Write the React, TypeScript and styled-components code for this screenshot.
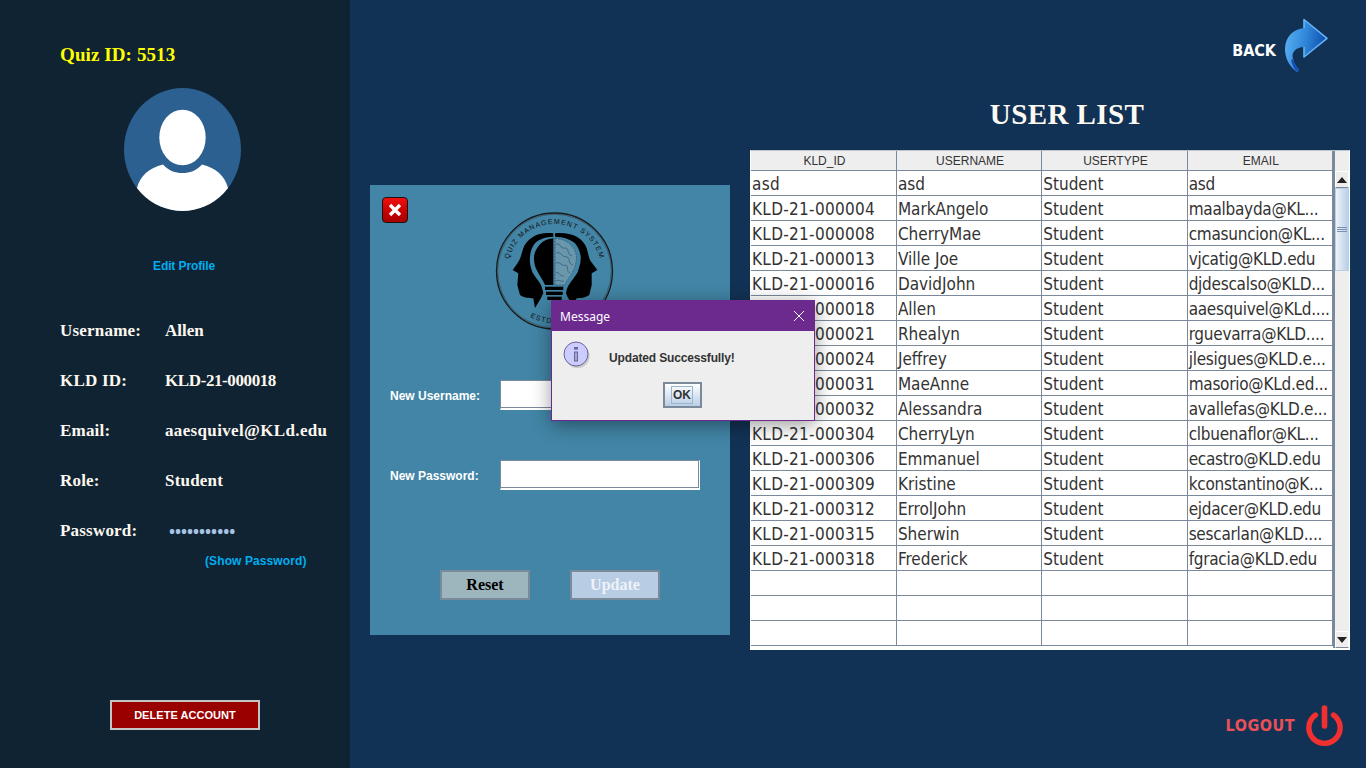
import React from 'react';
import styled, { createGlobalStyle } from 'styled-components';

const GlobalStyle = createGlobalStyle`
  html, body { margin: 0; padding: 0; height: 100%; overflow: hidden; }
  body { font-family: "Liberation Sans", Arial, sans-serif; background: #123255; }
`;

const serif = `"Liberation Serif", "Times New Roman", serif`;
const humanist = `"DejaVu Sans", "Noto Sans", sans-serif`;
const lineColor = '#7a8a9a';

const Page = styled.div`
  width: 1366px;
  height: 768px;
  display: flex;
  overflow: hidden;
  background: #123255;
`;

/* left profile column */
const Sidebar = styled.aside`
  width: 350px;
  flex: none;
  box-sizing: border-box;
  background: #0f2333;
  padding: 43px 0 38px 60px;
  display: flex;
  flex-direction: column;
`;

const QuizId = styled.div`
  font: bold 19px/24px ${serif};
  letter-spacing: 0.1px;
  color: #ffff00;
`;

const AvatarWrap = styled.div`
  width: 118px;
  height: 124px;
  margin: 21px 0 0 64px;
`;

const EditLink = styled.a`
  font-size: 12px;
  line-height: 14px;
  font-weight: bold;
  letter-spacing: -0.1px;
  color: #00aeef;
  margin: 47px 0 0 93px;
`;

const InfoList = styled.div`
  margin-top: 48px;
  display: flex;
  flex-direction: column;
  gap: 30px;
`;

const InfoRow = styled.div`
  display: flex;
  height: 20px;
  align-items: center;
  font: bold 17px/20px ${serif};
  color: #fdf8ef;
`;

const InfoLabel = styled.span`
  width: 105px;
  flex: none;
  letter-spacing: 0.2px;
`;

const InfoValue = styled.span<{ $tracking: number }>`
  letter-spacing: ${(p) => p.$tracking}px;
`;

const PasswordDots = styled.span`
  margin-left: 4px;
  font: bold 16px/20px "Noto Sans", sans-serif;
  color: #a9c3e3;
`;

const ShowPassword = styled.a`
  font-size: 12px;
  line-height: 14px;
  font-weight: bold;
  letter-spacing: 0.1px;
  color: #00aeef;
  margin: 13px 0 0 145px;
`;

const DeleteButton = styled.button`
  width: 150px;
  height: 30px;
  margin: auto 0 0 50px;
  padding: 0;
  background: #990000;
  border: 2px solid #c4c4c4;
  color: #fff;
  font: bold 11px "Liberation Sans", Arial, sans-serif;
  letter-spacing: 0.05px;
`;

/* main area */
const Main = styled.main`
  position: relative;
  flex: 1;
  display: grid;
  grid-template-columns: 360px 600px;
  column-gap: 20px;
  padding-left: 20px;
`;

const FormColumn = styled.div`
  padding-top: 185px;
`;

const FormCard = styled.section`
  width: 360px;
  height: 450px;
  box-sizing: border-box;
  background: #4285a6;
  padding: 12px 20px 0 12px;
  display: flex;
  flex-direction: column;
`;

const CardTop = styled.div`
  height: 183px;
  display: flex;
  align-items: flex-start;
`;

const CloseButton = styled.button`
  width: 26px;
  height: 26px;
  padding: 0;
  border: 1px solid #1c1010;
  border-radius: 4px;
  background: linear-gradient(180deg, #f01010 0%, #c80000 55%, #a80000 100%);
  display: flex;
  align-items: center;
  justify-content: center;
`;

const LogoWrap = styled.div`
  width: 122px;
  height: 122px;
  margin: 13px 0 0 86px;
`;

const Field = styled.div`
  display: flex;
  align-items: center;
  height: 30px;
  margin: 0 0 50px 8px;
`;

const FieldLabel = styled.label`
  width: 110px;
  flex: none;
  padding-top: 1px;
  color: #fff;
  font-size: 12px;
  font-weight: bold;
`;

const TextInput = styled.input`
  width: 200px;
  height: 30px;
  box-sizing: border-box;
  background: #fff;
  border-style: solid;
  border-width: 1px 1px 2px 1px;
  border-color: ${lineColor} #fff #fff ${lineColor};
  box-shadow: inset 0 -1px 0 ${lineColor}, inset -1px 0 0 ${lineColor};
`;

const ButtonRow = styled.div`
  display: flex;
  gap: 40px;
  margin: 30px 0 0 58px;
`;

const FormButton = styled.button<{ $disabled?: boolean }>`
  width: 90px;
  height: 30px;
  padding: 0;
  border: 2px solid ${lineColor};
  background: ${(p) => (p.$disabled ? '#b8cce4' : '#9db5bd')};
  color: ${(p) => (p.$disabled ? '#eef2f8' : '#000')};
  font: bold 16px ${serif};
`;

const ListColumn = styled.div`
  display: flex;
  flex-direction: column;
  height: 768px;
`;

const BackRow = styled.div`
  height: 82px;
  display: flex;
  align-items: flex-start;
  justify-content: flex-end;
  gap: 8px;
  padding: 18px 22px 0 0;
  box-sizing: border-box;
`;

const BackLabel = styled.span`
  font: bold 16px/20px ${humanist};
  font-stretch: condensed;
  color: #fff;
  margin-top: 23px;
`;

const Title = styled.h1`
  margin: 0;
  height: 68px;
  padding: 14px 0 0 34px;
  box-sizing: border-box;
  text-align: center;
  font: bold 29px/36px ${serif};
  letter-spacing: 0.4px;
  color: #fdfaf3;
`;

const TableFrame = styled.div`
  width: 600px;
  height: 500px;
  box-sizing: border-box;
  border: 1px solid #fff;
  border-width: 1px 1px 2px 1px;
  border-top-color: #b9c3cc;
  background: #fff;
  display: flex;
  overflow: hidden;
`;

const TableBody = styled.table`
  width: 582px;
  flex: none;
  table-layout: fixed;
  border-collapse: collapse;
  align-self: flex-start;
`;

const HeadCell = styled.th`
  height: 19px;
  padding: 2px 0 0 2px;
  box-sizing: border-box;
  background: #eeeeee;
  border: 1px solid ${lineColor};
  border-width: 0 1px 1px 0;
  font-size: 12px;
  line-height: 14px;
  font-weight: normal;
  color: #333;
  text-align: center;
`;

const Cell = styled.td`
  height: 24px;
  box-sizing: content-box;
  padding: 0 0 0 1px;
  border: 1px solid ${lineColor};
  border-width: 0 1px 1px 0;
  font: 17px/26px ${humanist};
  font-stretch: condensed;
  color: #333;
  white-space: nowrap;
  overflow: visible;

  &:first-child {
    letter-spacing: 0.3px;
  }

  &:last-child {
    letter-spacing: -0.25px;
  }
`;

const CellText = styled.div`
  height: 24px;
`;

const Scrollbar = styled.div`
  flex: 1;
  box-sizing: border-box;
  display: flex;
  flex-direction: column;
  background: #eeeeee;
  border-left: 2px solid ${lineColor};
  padding-top: 20px;
`;

const ScrollButton = styled.div`
  height: 15px;
  flex: none;
  background: #eeeeee;
  border: 1px solid #fff;
  border-bottom-color: ${lineColor};
  display: flex;
  align-items: center;
  justify-content: center;
  font-size: 0;
`;

const ScrollThumb = styled.div`
  height: 83px;
  flex: none;
  background: linear-gradient(90deg, #eef3fa, #b8cfe5);
  border: 1px solid #b8cfe5;
  box-sizing: border-box;
  display: flex;
  align-items: center;
  justify-content: center;
`;

const ScrollTrack = styled.div`
  flex: 1;
`;

const LogoutRow = styled.div`
  flex: 1;
  display: flex;
  align-items: flex-start;
  justify-content: flex-end;
  gap: 10px;
  padding: 54px 5px 0 0;
`;

const LogoutLabel = styled.span`
  font: bold 16px/22px ${humanist};
  font-stretch: condensed;
  letter-spacing: 0.5px;
  color: #ea5055;
  margin-top: 11px;
`;

/* floating message dialog */
const Dialog = styled.div`
  position: absolute;
  left: 201px;
  top: 300px;
  width: 264px;
  height: 121px;
  box-sizing: border-box;
  border: 1px solid #6c2a8f;
  background: #eeeeee;
  box-shadow: 0 4px 18px rgba(0, 0, 0, 0.4);
`;

const DialogBar = styled.div`
  height: 30px;
  background: #6c2a8f;
  color: #fff;
  display: flex;
  align-items: center;
  justify-content: space-between;
  padding: 0 9px 0 8px;
  font: 12px "Noto Sans", sans-serif;
`;

const DialogBody = styled.div`
  display: flex;
  align-items: center;
  gap: 18px;
  padding: 7px 0 0 11px;
  height: 34px;
`;

const DialogText = styled.span`
  font-size: 12px;
  font-weight: bold;
  letter-spacing: -0.15px;
  color: #333;
  margin-top: 6px;
`;

const OkRow = styled.div`
  display: flex;
  justify-content: center;
  padding: 10px 2px 0 0;
`;

const OkButton = styled.button`
  width: 39px;
  height: 26px;
  box-sizing: border-box;
  padding: 0;
  border: 2px solid ${lineColor};
  background: linear-gradient(180deg, #ffffff, #b8cfe5);
  display: flex;
  align-items: center;
  justify-content: center;
`;

const OkFocus = styled.span`
  border: 1px solid #9db4d0;
  font: 12px/14px "Liberation Sans", Arial, sans-serif;
  font-weight: bold;
  color: #333;
  padding: 1px 1px;
`;

const Avatar = () => (
  <svg width="118" height="124" viewBox="0 0 118 124">
    <defs>
      <clipPath id="avatar-clip">
        <ellipse cx="58.5" cy="61.5" rx="58.5" ry="61.5" />
      </clipPath>
    </defs>
    <ellipse cx="58.5" cy="61.5" rx="58.5" ry="61.5" fill="#2c6090" />
    <g clipPath="url(#avatar-clip)">
      <ellipse cx="58.5" cy="49.5" rx="23.2" ry="27.8" fill="#fff" />
      <path
        d="M39 76.5 C45 83 51 85 58.5 85 C66 85 72 83 78 76.5 C92 80 101 88 104 100 L104 124 L13 124 L13 100 C16 88 25 80 39 76.5 Z"
        fill="#fff"
      />
    </g>
  </svg>
);

const Logo = () => (
  <svg width="122" height="122" viewBox="0 0 122 122">
    <defs>
      <path id="logo-top" d="M13.5 61 A47 47 0 0 1 107.5 61" />
      <path id="logo-bottom" d="M8.5 61 A52 52 0 0 0 112.5 61" />
    </defs>
    <circle cx="60.5" cy="61" r="58" fill="none" stroke="#1b1b1b" strokeWidth="1.3" />
    <circle cx="60.5" cy="61" r="56.8" fill="none" stroke="#333" strokeWidth="0.5" />
    <text fontFamily="Liberation Sans, sans-serif" fontSize="7" letterSpacing="1.1" fill="#111" textAnchor="middle">
      <textPath href="#logo-top" startOffset="50%">QUIZ MANAGEMENT SYSTEM</textPath>
    </text>
    <text fontFamily="Liberation Sans, sans-serif" fontSize="7" letterSpacing="1.2" fill="#111">
      <textPath href="#logo-bottom" startOffset="56">ESTD</textPath>
    </text>
    {/* left face, inner edge follows the bulb outline */}
    <path
      d="M59.3 23.3 C50 22.5 44 24 39.3 26.7 C34 30 30.5 34 29.3 38.3 L26.7 46.7 C25.5 51 22 55 18.7 60 L24.3 63.3 L23.3 75 L26 85 C30 88 35 88 39.3 88.3 L41 98 L47 88 L49.3 83.3 C48.5 79 47.5 76 46 73.3 C42 67 38.5 64 37.7 60 C36 55 35.5 51 36 46.7 C36.5 41 38 37 41 33.3 C45 29 52 27 59.3 26.7 Z"
      fill="#000"
    />
    {/* right face */}
    <path
      d="M61 23.3 C70 22.5 77 24 82.7 26.7 C88 30 91.5 34 92.7 38.3 L95.3 48.3 C96.5 52 100 55 103.3 60 L97.7 63.3 L97.7 75 L95.3 85 C91 88 87 88 82.7 88.3 L79.3 95 L74 88 L72 83.3 C72.5 79 74 76 76 73.3 C80 67 83.5 64 84.3 60 C86 55 87 51 86.7 46.7 C86 41 84 37 81 33.3 C76 29 69 27 61 26.7 Z"
      fill="#000"
    />
    {/* bulb: solid half and brain half */}
    <path d="M59.3 28.3 C53 29 49 31 46 34.3 C42 39 40 43 40 48.3 C40 53 41 57 42.7 60 C45 65 49 70 51 75 L59.3 75 Z" fill="#000" />
    <path
      d="M61 28.3 C70 29 78 33 81.5 42 C84 50 81 58 77 65 C74 69 72 72 71 75 L61 75 Z"
      fill="#6b97ad"
      stroke="#2e5e78"
      strokeWidth="0.8"
      strokeDasharray="2 1"
    />
    <path
      d="M62 34 C68 33 65 39 71 38 C76 38 72 44 78 46 M62 43 C67 41 67 47 73 47 C77 49 73 53 79 55 M62 53 C66 51 68 57 72 55 C75 57 72 62 76 63 M62 63 C66 61 65 67 70 66 M62 71 C65 69 66 72 70 71"
      fill="none"
      stroke="#2e5e78"
      strokeWidth="0.8"
    />
    <rect x="51" y="76.7" width="18.3" height="3.3" fill="#000" />
    <rect x="52" y="81.7" width="16.7" height="3.3" fill="#000" />
    <rect x="53.3" y="86.7" width="14.4" height="3.3" fill="#000" />
  </svg>
);

const BackArrow = () => (
  <svg width="44" height="56" viewBox="0 0 44 56">
    <defs>
      <linearGradient id="back-fill" x1="0" y1="0" x2="1" y2="0.2">
        <stop offset="0" stopColor="#5db4f4" />
        <stop offset="0.55" stopColor="#2f86d8" />
        <stop offset="1" stopColor="#0f4fae" />
      </linearGradient>
    </defs>
    <path
      d="M20 1.5 L43 20.3 L20 39 V29 C12 29 7 34 9 41 C10 46 13 49 15 52 L13 54 C5 48 1 40 1 31 C1 18 10 11 20 10 Z"
      fill="url(#back-fill)"
    />
    <path d="M20 10 V1.5 L43 20.3 L20 39 V29" fill="none" stroke="#62b4f5" strokeWidth="1.6" strokeLinejoin="round" />
    <path d="M9 41 C10 46 13 49 15 52 L13 54 C10 51 8 47 7 42 Z" fill="#1450b8" />
  </svg>
);

const PowerIcon = () => (
  <svg width="40" height="42" viewBox="0 0 40 42">
    <path d="M10.5 11 A15.6 15.6 0 1 0 28.5 11" fill="none" stroke="#f33030" strokeWidth="5.4" strokeLinecap="round" />
    <line x1="19.5" y1="4" x2="19.5" y2="22" stroke="#f33030" strokeWidth="5.6" strokeLinecap="round" />
  </svg>
);

const InfoBadge = () => (
  <svg width="28" height="28" viewBox="0 0 28 28">
    <circle cx="14.5" cy="15" r="12" fill="#9a9a9a" opacity="0.45" />
    <circle cx="13" cy="13" r="12" fill="#ccccff" stroke="#66669a" strokeWidth="1" />
    <rect x="11" y="10.5" width="4" height="10" fill="#66669a" />
    <rect x="11" y="6" width="4" height="2.6" fill="#66669a" />
    <rect x="12.5" y="11.5" width="1" height="8" fill="#e8e8ff" />
  </svg>
);

const infoRows: [string, string, number][] = [
  ['Username:', 'Allen', 0],
  ['KLD ID:', 'KLD-21-000018', -0.4],
  ['Email:', 'aaesquivel@KLd.edu', 0.35],
  ['Role:', 'Student', 0.2],
];

const users = [
  ['asd', 'asd', 'Student', 'asd'],
  ['KLD-21-000004', 'MarkAngelo', 'Student', 'maalbayda@KL...'],
  ['KLD-21-000008', 'CherryMae', 'Student', 'cmasuncion@KL...'],
  ['KLD-21-000013', 'Ville Joe', 'Student', 'vjcatig@KLD.edu'],
  ['KLD-21-000016', 'DavidJohn', 'Student', 'djdescalso@KLD...'],
  ['KLD-21-000018', 'Allen', 'Student', 'aaesquivel@KLd....'],
  ['KLD-21-000021', 'Rhealyn', 'Student', 'rguevarra@KLD....'],
  ['KLD-21-000024', 'Jeffrey', 'Student', 'jlesigues@KLD.e...'],
  ['KLD-21-000031', 'MaeAnne', 'Student', 'masorio@KLd.ed...'],
  ['KLD-21-000032', 'Alessandra', 'Student', 'avallefas@KLD.e...'],
  ['KLD-21-000304', 'CherryLyn', 'Student', 'clbuenaflor@KL...'],
  ['KLD-21-000306', 'Emmanuel', 'Student', 'ecastro@KLD.edu'],
  ['KLD-21-000309', 'Kristine', 'Student', 'kconstantino@K...'],
  ['KLD-21-000312', 'ErrolJohn', 'Student', 'ejdacer@KLD.edu'],
  ['KLD-21-000315', 'Sherwin', 'Student', 'sescarlan@KLD....'],
  ['KLD-21-000318', 'Frederick', 'Student', 'fgracia@KLD.edu'],
  ['', '', '', ''],
  ['', '', '', ''],
  ['', '', '', ''],
];

const App: React.FC = () => (
  <Page>
    <GlobalStyle />
    <Sidebar>
      <QuizId>Quiz ID: 5513</QuizId>
      <AvatarWrap>
        <Avatar />
      </AvatarWrap>
      <EditLink>Edit Profile</EditLink>
      <InfoList>
        {infoRows.map(([label, value, tracking]) => (
          <InfoRow key={label}>
            <InfoLabel>{label}</InfoLabel>
            <InfoValue $tracking={tracking}>{value}</InfoValue>
          </InfoRow>
        ))}
        <InfoRow>
          <InfoLabel>Password:</InfoLabel>
          <PasswordDots>•••••••••••</PasswordDots>
        </InfoRow>
      </InfoList>
      <ShowPassword>(Show Password)</ShowPassword>
      <DeleteButton>DELETE ACCOUNT</DeleteButton>
    </Sidebar>

    <Main>
      <FormColumn>
        <FormCard>
          <CardTop>
            <CloseButton>
              <svg width="16" height="16" viewBox="0 0 16 16">
                <path d="M3 3 L13 13 M13 3 L3 13" stroke="#fff" strokeWidth="3.4" />
              </svg>
            </CloseButton>
            <LogoWrap>
              <Logo />
            </LogoWrap>
          </CardTop>
          <Field>
            <FieldLabel>New Username:</FieldLabel>
            <TextInput />
          </Field>
          <Field>
            <FieldLabel>New Password:</FieldLabel>
            <TextInput />
          </Field>
          <ButtonRow>
            <FormButton>Reset</FormButton>
            <FormButton $disabled>Update</FormButton>
          </ButtonRow>
        </FormCard>
      </FormColumn>

      <ListColumn>
        <BackRow>
          <BackLabel>BACK</BackLabel>
          <BackArrow />
        </BackRow>
        <Title>USER LIST</Title>
        <TableFrame>
          <TableBody>
            <thead>
              <tr>
                <HeadCell>KLD_ID</HeadCell>
                <HeadCell>USERNAME</HeadCell>
                <HeadCell>USERTYPE</HeadCell>
                <HeadCell>EMAIL</HeadCell>
              </tr>
            </thead>
            <tbody>
              {users.map((row, i) => (
                <tr key={i}>
                  {row.map((value, j) => (
                    <Cell key={j}>
                      <CellText>{value}</CellText>
                    </Cell>
                  ))}
                </tr>
              ))}
            </tbody>
          </TableBody>
          <Scrollbar>
            <ScrollButton>
              <svg width="10" height="6" viewBox="0 0 10 6">
                <path d="M5 0 L10 6 H0 Z" fill="#222" />
              </svg>
            </ScrollButton>
            <ScrollThumb>
              <svg width="10" height="5" viewBox="0 0 10 5">
                <path d="M0 .5 H10 M0 2.5 H10 M0 4.5 H10" stroke="#7a8fb5" />
              </svg>
            </ScrollThumb>
            <ScrollTrack />
            <ScrollButton>
              <svg width="10" height="6" viewBox="0 0 10 6">
                <path d="M0 0 H10 L5 6 Z" fill="#222" />
              </svg>
            </ScrollButton>
          </Scrollbar>
        </TableFrame>
        <LogoutRow>
          <LogoutLabel>LOGOUT</LogoutLabel>
          <PowerIcon />
        </LogoutRow>
      </ListColumn>

      <Dialog>
        <DialogBar>
          <span>Message</span>
          <svg width="12" height="12" viewBox="0 0 12 12">
            <path d="M1 1 L11 11 M11 1 L1 11" stroke="#fff" strokeWidth="1" />
          </svg>
        </DialogBar>
        <DialogBody>
          <InfoBadge />
          <DialogText>Updated Successfully!</DialogText>
        </DialogBody>
        <OkRow>
          <OkButton>
            <OkFocus>OK</OkFocus>
          </OkButton>
        </OkRow>
      </Dialog>
    </Main>
  </Page>
);

export default App;
